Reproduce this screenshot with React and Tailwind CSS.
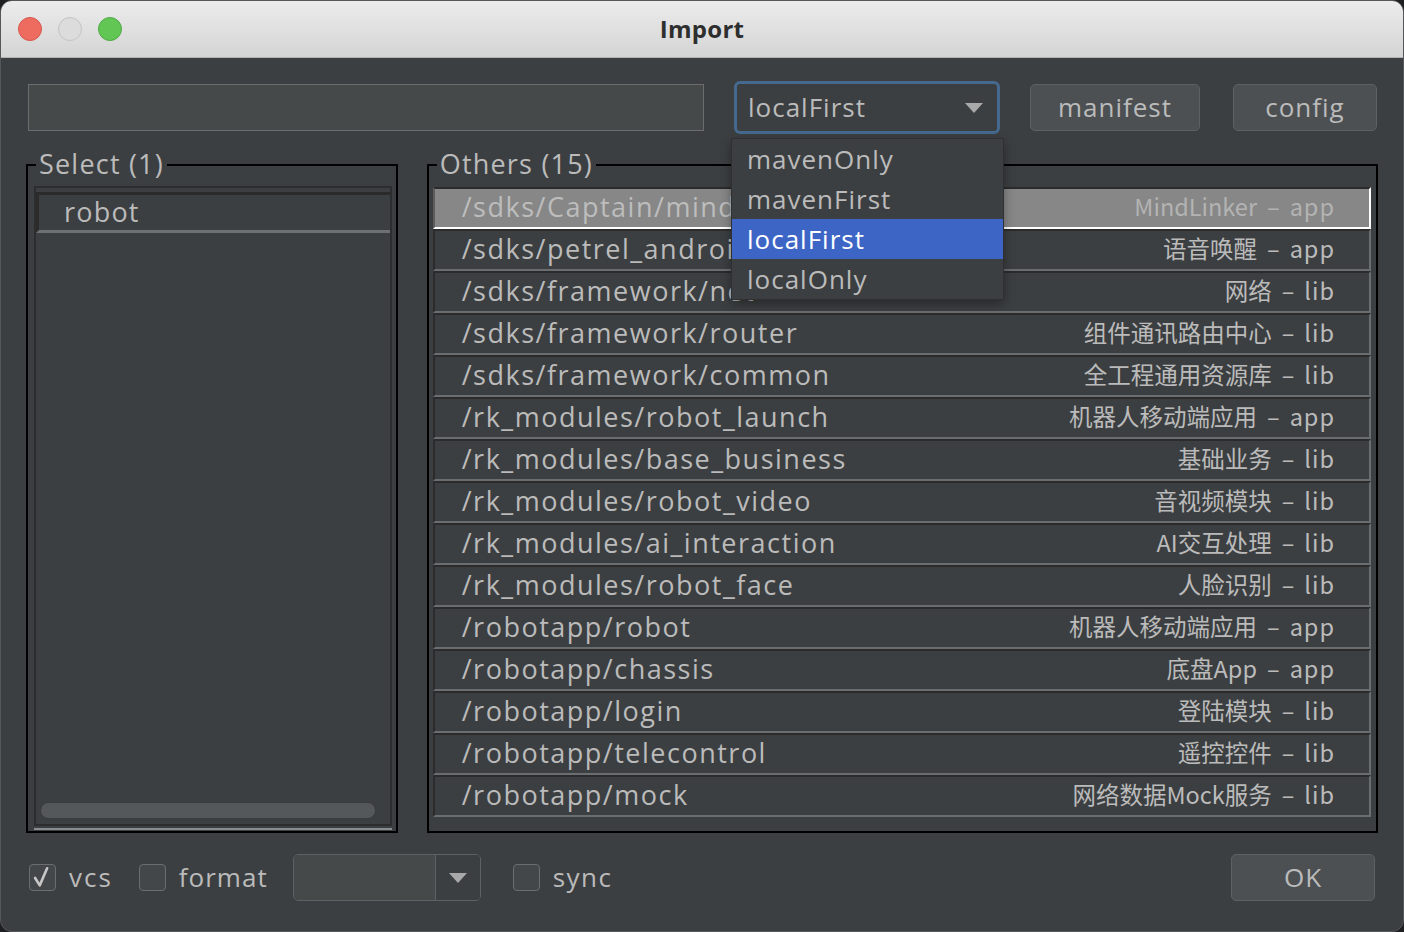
const modules = [
  { path: "/sdks/Captain/mindlinker", name: "MindLinker", type: "app" },
  { path: "/sdks/petrel_android", name: "语音唤醒", type: "app" },
  { path: "/sdks/framework/net", name: "网络", type: "lib" },
  { path: "/sdks/framework/router", name: "组件通讯路由中心", type: "lib" },
  { path: "/sdks/framework/common", name: "全工程通用资源库", type: "lib" },
  { path: "/rk_modules/robot_launch", name: "机器人移动端应用", type: "app" },
  { path: "/rk_modules/base_business", name: "基础业务", type: "lib" },
  { path: "/rk_modules/robot_video", name: "音视频模块", type: "lib" },
  { path: "/rk_modules/ai_interaction", name: "AI交互处理", type: "lib" },
  { path: "/rk_modules/robot_face", name: "人脸识别", type: "lib" },
  { path: "/robotapp/robot", name: "机器人移动端应用", type: "app" },
  { path: "/robotapp/chassis", name: "底盘App", type: "app" },
  { path: "/robotapp/login", name: "登陆模块", type: "lib" },
  { path: "/robotapp/telecontrol", name: "遥控控件", type: "lib" },
  { path: "/robotapp/mock", name: "网络数据Mock服务", type: "lib" },
];

const modes = ["mavenOnly", "mavenFirst", "localFirst", "localOnly"];

const Arrow = () => (
  <svg width="18" height="10" viewBox="0 0 18 10">
    <path d="M0 0 L18 0 L9 10 Z" fill="#a9a9a9" />
  </svg>
);

const CheckBox = ({ checked }) => (
  <div className="w-[27px] h-[27px] rounded-[4px] border border-[#6b6e70] bg-[#43474a] flex items-center justify-center">
    {checked && (
      <svg width="27" height="27" viewBox="0 0 27 27">
        <path d="M5.5 14 L10.5 22 L18.5 3.5" fill="none" stroke="#c6c6c6" strokeWidth="2.8" strokeLinejoin="round" strokeLinecap="round" />
      </svg>
    )}
  </div>
);

const Row = ({ item, active }) => (
  <div
    className={
      active
        ? "h-[42px] shrink-0 flex items-center justify-between pl-[27px] pr-[34px] pb-[2px] bg-[#878787] border-2 border-t-[#2b2b2b] border-l-[#5c5c5c] border-b-white border-r-white"
        : "h-[42px] shrink-0 flex items-center justify-between pl-[27px] pr-[34px] pb-[2px] border-2 border-t-[#2b2b2b] border-l-[#2b2b2b] border-b-[#6b6e70] border-r-[#6b6e70]"
    }
  >
    <span className={active ? "text-[27px] tracking-[1.5px] text-[#bdbdbd] whitespace-nowrap" : "text-[27px] tracking-[1.5px] text-[#bbbbbb] whitespace-nowrap"}>
      {item.path}
    </span>
    <span className={active ? "font-['Noto_Sans_CJK_SC',sans-serif] text-[23.5px] text-[#b3b3b3] whitespace-nowrap" : "font-['Noto_Sans_CJK_SC',sans-serif] text-[23.5px] text-[#bbbbbb] whitespace-nowrap"}>
      {item.name}
      <span className="mx-[10px]">–</span>
      <span className="tracking-[1px]">{item.type}</span>
    </span>
  </div>
);

export default function App() {
  return (
    <div className="w-[1404px] h-[932px] bg-[#1e1f21] overflow-hidden font-['Open_Sans',sans-serif] text-[#bbbbbb]">
      <div className="relative h-full rounded-[12px] overflow-hidden flex flex-col bg-[#3c3f41] border border-[#55585a]">
        {/* title bar */}
        <div className="h-[57px] shrink-0 grid grid-cols-[1fr_auto_1fr] items-center bg-gradient-to-b from-[#ececec] to-[#d4d4d4] border-b border-[#b3b3b3]">
          <div className="flex items-center gap-[16px] pl-[17px]">
            <div className="w-6 h-6 rounded-full bg-[#ee6b60] border border-[#d6574c]" />
            <div className="w-6 h-6 rounded-full bg-[#dcdcdc] border border-[#c4c4c4]" />
            <div className="w-6 h-6 rounded-full bg-[#62c655] border border-[#51a847]" />
          </div>
          <div className="text-[24px] font-bold tracking-[0.3px] text-[#2e2e2e]">Import</div>
          <div />
        </div>

        <div className="flex-1 flex flex-col px-[25px]">
          {/* top row */}
          <div className="mt-[23px] h-[53px] flex items-center">
            <div className="ml-[2px] w-[676px] h-[47px] bg-[#45494a] border border-[#6a6c6e]" />
            <div className="ml-[30px] w-[266px] h-[53px] rounded-[6px] border-[3px] border-[#46698f] bg-[#3c3f41] flex items-center justify-between pl-[11px] pr-[14px]">
              <span className="text-[26px] tracking-[1px]">localFirst</span>
              <Arrow />
            </div>
            <div className="ml-[30px] w-[170px] h-[47px] rounded-[5px] bg-[#4c5052] border border-[#5e6163] flex items-center justify-center text-[26px] tracking-[1px]">
              manifest
            </div>
            <div className="ml-[33px] w-[144px] h-[47px] rounded-[5px] bg-[#4c5052] border border-[#5e6163] flex items-center justify-center text-[26px] tracking-[1px]">
              config
            </div>
          </div>

          {/* groups */}
          <div className="mt-[30px] h-[669px] flex">
            <div className="w-[372px] border-2 border-black flex flex-col">
              <span className="-mt-[18px] ml-[8px] px-[3px] self-start bg-[#3c3f41] text-[27px] leading-[32px] tracking-[1.2px]">Select (1)</span>
              <div className="mt-[6px] ml-[6px] mr-[4px] flex-1 flex flex-col">
                <div className="flex-1 flex flex-col border-2 border-[#2b2d2f] pt-[4px]">
                  <div className="h-[41px] flex items-center pl-[25px] border-t-[3px] border-l-[3px] border-[#2b2b2b] border-b-[3px] border-b-[#6e7173]">
                    <span className="text-[27px] tracking-[1.2px]">robot</span>
                  </div>
                  <div className="mt-auto mb-[5px] ml-[4px] mr-[14px] h-[17px] rounded-full bg-[#55585a] border border-[#393b3d]" />
                </div>
                <div className="h-[2px] mt-[2px] mb-[1px] bg-[#8a8d8f]" />
              </div>
            </div>

            <div className="ml-[29px] w-[952px] border-2 border-black flex flex-col">
              <span className="-mt-[18px] ml-[8px] px-[3px] self-start bg-[#3c3f41] text-[27px] leading-[32px] tracking-[1.2px]">Others (15)</span>
              <div className="mt-[7px] ml-[4px] mr-[5px] flex flex-col">
                {modules.map((m, i) => (
                  <Row key={m.path} item={m} active={i === 0} />
                ))}
              </div>
            </div>
          </div>

          {/* bottom row */}
          <div className="mt-[21px] h-[47px] flex items-center">
            <div className="ml-[3px]"><CheckBox checked /></div>
            <span className="ml-[13px] text-[26px] tracking-[2px]">vcs</span>
            <div className="ml-[26px]"><CheckBox /></div>
            <span className="ml-[13px] text-[26px] tracking-[1px]">format</span>
            <div className="ml-[25px] w-[188px] h-[47px] rounded-[5px] border border-[#5e6163] overflow-hidden flex">
              <div className="flex-1 bg-[#45494a]" />
              <div className="w-[45px] border-l border-[#5e6163] bg-[#3c3f41] flex items-center justify-center">
                <Arrow />
              </div>
            </div>
            <div className="ml-[32px]"><CheckBox /></div>
            <span className="ml-[13px] text-[26px] tracking-[1.5px]">sync</span>
            <div className="ml-auto mr-[3px] w-[144px] h-[47px] rounded-[5px] bg-[#4c5052] border border-[#5e6163] flex items-center justify-center text-[26px] tracking-[1px]">
              OK
            </div>
          </div>
        </div>

        {/* open dropdown */}
        <div className="absolute left-[730px] top-[137px] w-[273px] bg-[#3c3f41] border border-[#2e3032] shadow-[0_4px_10px_rgba(0,0,0,0.35)] z-10">
          {modes.map((mode) => (
            <div
              key={mode}
              className={
                mode === "localFirst"
                  ? "h-[40px] flex items-center pl-[15px] bg-[#3c65c6] text-white text-[26px] tracking-[1px]"
                  : "h-[40px] flex items-center pl-[15px] text-[26px] tracking-[1px]"
              }
            >
              {mode}
            </div>
          ))}
        </div>
      </div>
    </div>
  );
}
